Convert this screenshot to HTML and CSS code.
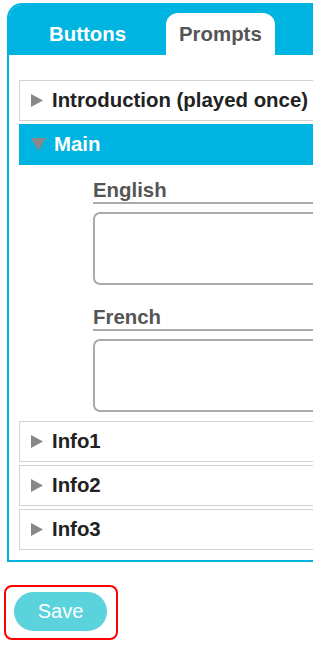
FILE: index.html
```html
<!DOCTYPE html>
<html lang="en">
<head>
  <meta charset="UTF-8" />
  <meta name="viewport" content="width=device-width, initial-scale=1.0"/>
  <title>Prompts</title>
  <link rel="stylesheet" href="styles.css">
</head>
<body>
  <div class="panel">
    <div class="tabs">
      <div class="tab">Buttons</div>
      <div class="tab active">Prompts</div>
    </div>

    <div class="content">
      <div class="item">
        <div class="item-head">
          <svg class="arrow" width="12" height="13" viewBox="0 0 12 13"><polygon points="0,0 12,6.5 0,13"/></svg>
          Introduction (played once)
        </div>
      </div>

      <div class="item open">
        <div class="item-head">
          <svg class="arrow down" width="15" height="13" viewBox="0 0 15 13"><polygon points="0,0 15,0 7.5,13"/></svg>
          Main
        </div>
        <div class="item-body">
          <div class="field">
            <label for="main_en">English</label>
            <textarea id="main_en"></textarea>
          </div>
          <div class="field">
            <label for="main_fr">French</label>
            <textarea id="main_fr"></textarea>
          </div>
        </div>
      </div>

      <div class="item">
        <div class="item-head">
          <svg class="arrow" width="12" height="13" viewBox="0 0 12 13"><polygon points="0,0 12,6.5 0,13"/></svg>
          Info1
        </div>
      </div>
      <div class="item">
        <div class="item-head">
          <svg class="arrow" width="12" height="13" viewBox="0 0 12 13"><polygon points="0,0 12,6.5 0,13"/></svg>
          Info2
        </div>
      </div>
      <div class="item">
        <div class="item-head">
          <svg class="arrow" width="12" height="13" viewBox="0 0 12 13"><polygon points="0,0 12,6.5 0,13"/></svg>
          Info3
        </div>
      </div>
    </div>
  </div>

  <div class="save-box">
    <button type="button" class="save">Save</button>
  </div>
</body>
</html>
```

FILE: styles.css
```css
body {
  margin: 0;
  padding: 3px 0 20px 7px;
  background-color: #fff;
  font-family: 'Liberation Sans', Arial, sans-serif;
  overflow-x: hidden;
}

.panel {
  width: 460px;
  border: 2px solid #00b4e1;
  border-radius: 15px 15px 0 0;
  overflow: hidden;
}

.tabs {
  display: flex;
  gap: 27px;
  padding: 8px 0 0 27px;
  background-color: #00b4e1;
}

.tab {
  padding: 10px 13px 9px;
  font-size: 20.4px;
  line-height: 23px;
  font-weight: bold;
  color: #fff;
  border-radius: 12px 12px 0 0;
}

.tab.active {
  background-color: #fff;
  color: #555;
}

.content {
  padding: 25px 0 10px 10px;
  background-color: #fff;
}

.item {
  margin-bottom: 3px;
}

.item:last-child {
  margin-bottom: 0;
}

.item-head {
  display: flex;
  align-items: center;
  padding: 8px 0 8px 11px;
  border: 1px solid #d3d3d3;
  font-size: 20.4px;
  line-height: 23px;
  font-weight: bold;
  color: #222;
}

.arrow {
  flex-shrink: 0;
  margin-right: 9px;
  fill: #888;
}

.arrow.down {
  margin-right: 8px;
}

.item.open .item-head {
  background-color: #00b4e1;
  border-color: #00b4e1;
  color: #fff;
}

.item-body {
  display: flex;
  flex-direction: column;
  gap: 21px;
  padding: 14px 20px 6px 74px;
}

.field label {
  display: block;
  margin-bottom: 8px;
  font-size: 20.4px;
  line-height: 23px;
  font-weight: bold;
  color: #555;
  border-bottom: 2px solid #aaa;
}

.field textarea {
  display: block;
  box-sizing: border-box;
  width: 100%;
  height: 73px;
  border: 2px solid #aaa;
  border-radius: 7px;
  resize: none;
}

.save-box {
  display: inline-block;
  margin: 23px 0 0 -3px;
  padding: 5px 9px 7px 8px;
  border: 2px solid #f00;
  border-radius: 8px;
}

.save {
  display: block;
  width: 93px;
  height: 39px;
  border: none;
  border-radius: 20px;
  background-color: #5bd3dc;
  color: #fff;
  font-family: 'Liberation Sans', Arial, sans-serif;
  font-size: 20px;
  cursor: pointer;
}
```
